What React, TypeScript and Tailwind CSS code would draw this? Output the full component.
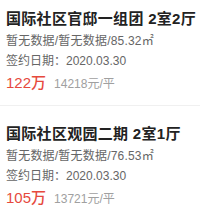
const deals = [
  {
    id: 1,
    title: "国际社区官邸一组团 2室2厅",
    info: "暂无数据/暂无数据/85.32㎡",
    date: "2020.03.30",
    price: "122万",
    unit: "14218元/平",
  },
  {
    id: 2,
    title: "国际社区观园二期 2室1厅",
    info: "暂无数据/暂无数据/76.53㎡",
    date: "2020.03.30",
    price: "105万",
    unit: "13721元/平",
  },
];

export default function App() {
  return (
    <div className="w-[200px] h-[220px] overflow-hidden bg-white font-['Liberation_Sans','Noto_Sans_CJK_SC',sans-serif]">
      <div className="-mt-[9px]">
        {deals.map((d) => (
          <div key={d.id} className="pl-[6px] pt-[17px] pb-[11px] border-b border-[#f0f0f0]">
            <p className="text-[15px] leading-[22px] font-bold tracking-[0.3px] text-[#222] whitespace-nowrap overflow-hidden">
              {d.title}
            </p>
            <p className="mt-[3px] text-[12px] leading-[16px] tracking-[0.2px] text-[#666]">{d.info}</p>
            <p className="mt-[4px] text-[12px] leading-[16px] text-[#666]">签约日期：{d.date}</p>
            <div className="mt-[4px] flex items-baseline gap-[8px] leading-[20px]">
              <span className="text-[15px] font-medium text-[#e6493d]">{d.price}</span>
              <span className="text-[12px] text-[#a0a0a0]">{d.unit}</span>
            </div>
          </div>
        ))}
      </div>
    </div>
  );
}
